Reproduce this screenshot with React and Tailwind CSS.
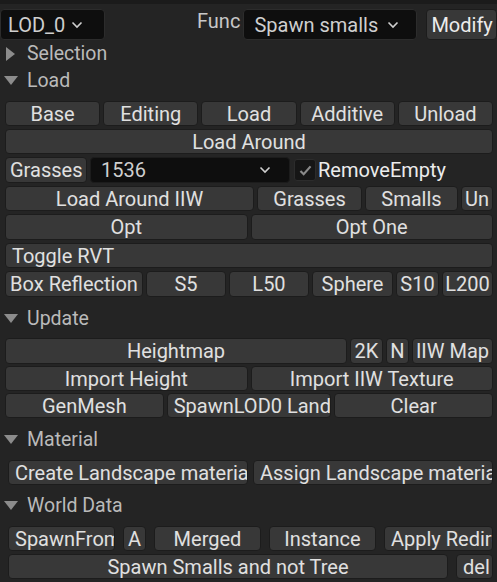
import React from 'react'

const btn =
  'h-full flex items-center justify-center whitespace-nowrap overflow-hidden rounded-[4px] bg-[#383838] border border-[#1c1c1c] text-[#e0e0e0] text-[20px] leading-none'

function Btn({ children, className = '', left = false }) {
  return (
    <div className={`${btn} ${left ? '!justify-start pl-[6px]' : ''} ${className}`}>
      {children}
    </div>
  )
}

function Chevron({ className }) {
  return (
    <svg viewBox="0 0 12 8" className={className} fill="none" stroke="currentColor" strokeWidth={1.6}>
      <path d="M1.5 1.5L6 6l4.5-4.5" />
    </svg>
  )
}

function Header({ label, open = true }) {
  return (
    <div className="h-[27px] flex items-center text-[#bababa] text-[19.5px] leading-none">
      <div className="w-[27px] flex items-center pl-[4px]">
        {open ? (
          <svg viewBox="0 0 14 9" className="w-[14px] h-[9px]">
            <path d="M0 0h14L7 9z" fill="#8c8c8c" />
          </svg>
        ) : (
          <svg viewBox="0 0 9 14" className="w-[9px] h-[14px] ml-[2px]">
            <path d="M0 0v14l9-7z" fill="#8c8c8c" />
          </svg>
        )}
      </div>
      <span>{label}</span>
    </div>
  )
}

export default function App() {
  return (
    <div
      className="w-[497px] h-[582px] bg-[#242424] overflow-hidden"
      style={{ fontFamily: 'Roboto, "Noto Sans", sans-serif' }}
    >
      <div className="h-[4px] bg-[#1b1b1b]" />

      {/* top bar */}
      <div className="flex items-start pt-[5px] h-[36px]">
        <div className="w-[105px] h-[31px] flex items-center gap-[6px] pl-[7px] bg-[#0e0e0e] border border-[#2c2c2c] rounded-[4px] text-[#cfcfcf] text-[20px] leading-none">
          <span>LOD_0</span>
          <Chevron className="w-[12px] h-[8px]" />
        </div>
        <div className="ml-[92px] pt-[2px] text-[#c8c8c8] text-[20px] leading-none">Func</div>
        <div className="ml-[3px] w-[174px] h-[31px] flex items-center gap-[9px] pl-[10px] bg-[#0e0e0e] border border-[#2c2c2c] rounded-[4px] text-[#cfcfcf] text-[20px] leading-none">
          <span>Spawn smalls</span>
          <Chevron className="w-[12px] h-[8px]" />
        </div>
        <div className="ml-[9px] flex-1 h-[31px] flex items-center pl-[4px] bg-[#383838] border border-[#1c1c1c] rounded-[4px] text-[#ececec] text-[20px] leading-none overflow-hidden">
          Modify
        </div>
      </div>

      <Header label="Selection" open={false} />
      <Header label="Load" />

      <div className="mt-[7px] pl-[5px] pr-[4px] flex flex-col gap-[3px]">
        <div className="h-[25px] flex gap-[3px]">
          <Btn className="flex-1">Base</Btn>
          <Btn className="flex-1">Editing</Btn>
          <Btn className="flex-1">Load</Btn>
          <Btn className="flex-1">Additive</Btn>
          <Btn className="flex-1">Unload</Btn>
        </div>
        <div className="h-[25px] flex">
          <Btn className="flex-1">Load Around</Btn>
        </div>
        <div className="h-[26px] flex items-center gap-[3px]">
          <Btn className="w-[82px] !justify-start pl-[4px]">Grasses</Btn>
          <div className="w-[200px] h-full flex items-center justify-between pl-[10px] pr-[18px] bg-[#0e0e0e] border border-[#1c1c1c] rounded-[4px] text-[#cfcfcf] text-[20px] leading-none">
            <span>1536</span>
            <Chevron className="w-[12px] h-[8px]" />
          </div>
          <div className="ml-[1px] w-[22px] h-[22px] flex items-center justify-center bg-[#161616] border border-[#2c2c2c] rounded-[3px]">
            <svg viewBox="0 0 14 12" className="w-[13px] h-[11px]" fill="none" stroke="#8a8a8a" strokeWidth={2.4}>
              <path d="M1.5 6.5l3.5 3.5 7.5-8.5" />
            </svg>
          </div>
          <span className="-ml-[1px] text-[#ececec] text-[20px] leading-none">RemoveEmpty</span>
        </div>
        <div className="h-[25px] flex gap-[3px]">
          <Btn className="w-[249px]">Load Around IIW</Btn>
          <Btn className="w-[105px]">Grasses</Btn>
          <Btn className="w-[93px]">Smalls</Btn>
          <Btn className="flex-1 !justify-start pl-[3px]">Un</Btn>
        </div>
        <div className="h-[26px] flex gap-[3px]">
          <Btn className="flex-1">Opt</Btn>
          <Btn className="flex-1">Opt One</Btn>
        </div>
        <div className="h-[25px] flex">
          <Btn className="flex-1" left>Toggle RVT</Btn>
        </div>
        <div className="h-[26px] flex gap-[3px]">
          <Btn className="w-[138px]">Box Reflection</Btn>
          <Btn className="w-[80px]">S5</Btn>
          <Btn className="w-[80px]">L50</Btn>
          <Btn className="w-[81px]">Sphere</Btn>
          <Btn className="w-[43px]">S10</Btn>
          <Btn className="flex-1">L200</Btn>
        </div>
      </div>

      <div className="mt-[8px]">
        <Header label="Update" />
      </div>

      <div className="mt-[6px] pl-[5px] pr-[4px] flex flex-col gap-[2px]">
        <div className="h-[26px] flex gap-[3px]">
          <Btn className="w-[342px]">Heightmap</Btn>
          <Btn className="w-[33px]">2K</Btn>
          <Btn className="w-[23px]">N</Btn>
          <Btn className="flex-1">IIW Map</Btn>
        </div>
        <div className="h-[25px] flex gap-[3px]">
          <Btn className="flex-1">Import Height</Btn>
          <Btn className="flex-1">Import IIW Texture</Btn>
        </div>
        <div className="h-[25px] flex gap-[3px]">
          <Btn className="flex-1">GenMesh</Btn>
          <Btn className="flex-1" left>SpawnLOD0 Landscape</Btn>
          <Btn className="flex-1">Clear</Btn>
        </div>
      </div>

      <div className="mt-[8px]">
        <Header label="Material" />
      </div>

      <div className="mt-[7px] pl-[8px] pr-[4px] flex gap-[5px] h-[25px]">
        <Btn className="flex-1" left>Create Landscape material</Btn>
        <Btn className="flex-1" left>Assign Landscape material</Btn>
      </div>

      <div className="mt-[7px]">
        <Header label="World Data" />
      </div>

      <div className="mt-[7px] pl-[8px] pr-[4px] flex flex-col gap-[3px]">
        <div className="h-[25px] flex gap-[8px]">
          <Btn className="w-[107px]" left>SpawnFromTable</Btn>
          <Btn className="w-[23px]">A</Btn>
          <Btn className="w-[107px]">Merged</Btn>
          <Btn className="w-[107px]">Instance</Btn>
          <Btn className="flex-1" left>Apply Redirect</Btn>
        </div>
        <div className="h-[25px] flex gap-[8px]">
          <Btn className="flex-1">Spawn Smalls and not Tree</Btn>
          <Btn className="w-[37px]" left>del</Btn>
        </div>
      </div>
    </div>
  )
}
